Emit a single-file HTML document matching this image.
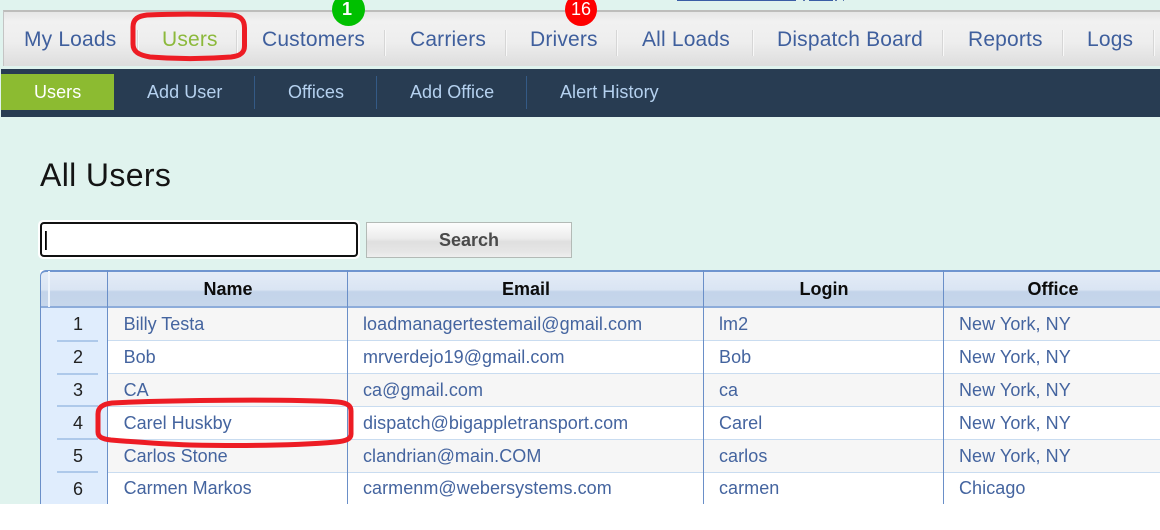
<!DOCTYPE html>
<html><head><meta charset="utf-8">
<style>
html,body{margin:0;padding:0;width:1160px;height:530px;overflow:hidden;background:#fff;font-family:"Liberation Sans",sans-serif}
#pg{position:absolute;left:0;top:0;width:1160px;height:504px;background:#e0f3ee;overflow:hidden}
.a{position:absolute;white-space:nowrap}
.nav{top:28px;font-size:21px;line-height:24px;color:#3f5f9d;letter-spacing:.17px}
.sep{position:absolute;top:30px;width:1px;height:26px;background:#d6d6d6;border-right:1px solid #f8f8f8}
.sub{top:81px;font-size:18px;line-height:22px;color:#b5d1ef;letter-spacing:.05px}
.ssep{position:absolute;top:76px;width:1px;height:33px;background:#345a86}
.th{position:absolute;top:280px;font-size:18px;line-height:18px;font-weight:bold;color:#0c0c0c;text-align:center}
.td{position:absolute;font-size:18px;line-height:20px;color:#44649f;white-space:nowrap;letter-spacing:.06px}
.nm{letter-spacing:0;margin-left:-.4px}
.n{position:absolute;left:58px;width:40px;text-align:center;font-size:18px;line-height:20px;color:#222}
.row{position:absolute;left:108px;width:1052px;height:32px;border-bottom:1px solid #c9dcf0}
.nl{position:absolute;left:57px;width:41px;height:2px;background:#aec9ea}
.v{position:absolute;top:270px;width:1px;height:234px;background:#6a8fc8}
</style></head><body>
<div id="pg">
<div class="a" style="left:677px;top:0;width:119px;height:1px;background:#3a5ea6"></div>
<div class="a" style="left:809px;top:0;width:24px;height:1px;background:#3a5ea6"></div>
<div class="a" style="left:803px;top:0;width:2px;height:1px;background:#5a76ad"></div>
<div class="a" style="left:835px;top:0;width:2px;height:1px;background:#5a76ad"></div>
<div class="a" style="left:843px;top:0;width:1px;height:1px;background:#5a76ad"></div>

<div class="a" style="left:3px;top:10px;width:1157px;height:56px;box-sizing:border-box;border-top:2px solid #bdbdbb;border-left:1px solid #c4c4c4;background:linear-gradient(#e6e6e6 0,#f1f1f1 18%,#eeeeee 55%,#dddddd 100%)"></div>
<div class="a nav" style="left:24px">My Loads</div>
<div class="a nav" style="left:162px;color:#8cb93c">Users</div>
<div class="a nav" style="left:262px">Customers</div>
<div class="a nav" style="left:410px">Carriers</div>
<div class="a nav" style="left:530px">Drivers</div>
<div class="a nav" style="left:642px">All Loads</div>
<div class="a nav" style="left:777px">Dispatch Board</div>
<div class="a nav" style="left:968px">Reports</div>
<div class="a nav" style="left:1087px">Logs</div>
<div class="sep" style="left:137px"></div>
<div class="sep" style="left:236px"></div>
<div class="sep" style="left:384px"></div>
<div class="sep" style="left:505px"></div>
<div class="sep" style="left:616px"></div>
<div class="sep" style="left:752px"></div>
<div class="sep" style="left:942px"></div>
<div class="sep" style="left:1062px"></div>
<div class="sep" style="left:1153px"></div>

<div class="a" style="left:332px;top:-7px;width:33px;height:33px;box-sizing:border-box;padding-right:3px;border-radius:50%;background:#00c000;color:#fff;font-size:18px;font-weight:bold;line-height:32px;text-align:center">1</div>
<div class="a" style="left:565px;top:-7px;width:32px;height:33px;border-radius:50%;background:#fe0000;color:#fff;font-size:18px;line-height:32px;text-align:center">16</div>

<div class="a" style="left:1px;top:69px;width:1159px;height:48px;background:#283c52"></div>
<div class="a" style="left:1px;top:74px;width:113px;height:36px;background:#8cbb31"></div>
<div class="a sub" style="left:34px;color:#fff">Users</div>
<div class="a sub" style="left:147px">Add User</div>
<div class="a sub" style="left:288px">Offices</div>
<div class="a sub" style="left:410px">Add Office</div>
<div class="a sub" style="left:560px">Alert History</div>
<div class="ssep" style="left:254px"></div>
<div class="ssep" style="left:376px"></div>
<div class="ssep" style="left:526px"></div>

<div class="a" style="left:40px;top:157px;font-size:32px;line-height:37px;color:#141414;letter-spacing:.36px">All Users</div>

<div class="a" style="left:38px;top:220px;width:322px;height:39px;background:#fff;border-radius:5px"></div>
<div class="a" style="left:40px;top:222px;width:318px;height:35px;box-sizing:border-box;background:#fff;border:2px solid #111;border-radius:4px"></div>
<div class="a" style="left:45px;top:231px;width:1px;height:19px;background:#000;border-right:1px solid #333"></div>
<div class="a" style="left:366px;top:222px;width:206px;height:36px;box-sizing:border-box;border:1px solid #b3bab6;background:linear-gradient(#fdfdfd 0,#ececec 45%,#dfdfdf 55%,#e6e6e6 85%,#efefef 100%);color:#4a4a4a;font-size:18px;font-weight:bold;line-height:34px;text-align:center">Search</div>

<div class="a" style="left:40px;top:270px;width:1120px;height:234px;background:#fff"></div>
<div class="a" style="left:40px;top:307px;width:68px;height:197px;background:#e0edfd"></div>
<div class="a" style="left:40px;top:270px;width:1120px;height:38px;box-sizing:border-box;border-top:2px solid #6f95cf;border-bottom:2px solid #8dacda;border-left:1px solid #6f95cf;border-top-left-radius:6px;background:linear-gradient(#e4ecf7 0,#dae5f3 52%,#c3d4ea 58%,#c6d6eb 100%)"></div>
<div class="a" style="left:48px;top:271px;width:2px;height:36px;background:#eef4fb"></div>

<div class="row" style="top:308px;background:#f6f6f6"></div>
<div class="row" style="top:341px;background:#fff"></div>
<div class="row" style="top:374px;background:#f6f6f6"></div>
<div class="row" style="top:407px;background:#fff"></div>
<div class="row" style="top:440px;background:#f6f6f6"></div>
<div class="row" style="top:473px;background:#fff;border:0"></div>

<div class="v" style="left:40px;top:280px;height:224px"></div>
<div class="v" style="left:107px"></div>
<div class="v" style="left:347px"></div>
<div class="v" style="left:703px"></div>
<div class="v" style="left:943px"></div>

<div class="th" style="left:108.500px;width:239px">Name</div>
<div class="th" style="left:348.500px;width:355px">Email</div>
<div class="th" style="left:704.500px;width:239px">Login</div>
<div class="th" style="left:945px;width:216px">Office</div>

<div class="nl" style="top:340px"></div>
<div class="nl" style="top:373px"></div>
<div class="nl" style="top:405px"></div>
<div class="nl" style="top:438px"></div>
<div class="nl" style="top:471px"></div>

<div class="n" style="top:314px">1</div>
<div class="n" style="top:347px">2</div>
<div class="n" style="top:380px">3</div>
<div class="n" style="top:413px">4</div>
<div class="n" style="top:446px">5</div>
<div class="n" style="top:479px">6</div>

<div class="td nm" style="left:124px;top:314px">Billy Testa</div>
<div class="td" style="left:363px;top:314px">loadmanagertestemail@gmail.com</div>
<div class="td" style="left:719px;top:314px">lm2</div>
<div class="td" style="left:959px;top:314px">New York, NY</div>

<div class="td nm" style="left:124px;top:347px">Bob</div>
<div class="td" style="left:363px;top:347px">mrverdejo19@gmail.com</div>
<div class="td" style="left:719px;top:347px">Bob</div>
<div class="td" style="left:959px;top:347px">New York, NY</div>

<div class="td nm" style="left:124px;top:380px">CA</div>
<div class="td" style="left:363px;top:380px">ca@gmail.com</div>
<div class="td" style="left:719px;top:380px">ca</div>
<div class="td" style="left:959px;top:380px">New York, NY</div>

<div class="td nm" style="left:124px;top:413px">Carel Huskby</div>
<div class="td" style="left:363px;top:413px">dispatch@bigappletransport.com</div>
<div class="td" style="left:719px;top:413px">Carel</div>
<div class="td" style="left:959px;top:413px">New York, NY</div>

<div class="td nm" style="left:124px;top:446px">Carlos Stone</div>
<div class="td" style="left:363px;top:446px">clandrian@main.COM</div>
<div class="td" style="left:719px;top:446px">carlos</div>
<div class="td" style="left:959px;top:446px">New York, NY</div>

<div class="td nm" style="left:124px;top:478px">Carmen Markos</div>
<div class="td" style="left:363px;top:478px">carmenm@webersystems.com</div>
<div class="td" style="left:719px;top:478px">carmen</div>
<div class="td" style="left:959px;top:478px">Chicago</div>
</div>

<svg class="a" style="left:0;top:0" width="1160" height="530" viewBox="0 0 1160 530" fill="none" stroke="#ed1c24" stroke-width="5" stroke-linecap="round" stroke-linejoin="round">
<path d="M147 15 C170 14 205 14 232 15 C241 16 244.500 20 244.500 28 L244.500 46 C244.500 53 240 56 231 57 C205 59 175 59 150 57 C139 55 133 52 133 44 L133 27 C133 19 138 16 147 15 Z"/>
<path d="M112 403 C170 400 290 399 338 402 C348 403 351 406 351 411 L351 434 C351 439 346 441 336 442 C290 446 240 446 190 445 C160 444 135 442 111 440 C102 439 98 437 98 432 L98 414 C98 407 103 404 112 403 Z"/>
</svg>
</body></html>
